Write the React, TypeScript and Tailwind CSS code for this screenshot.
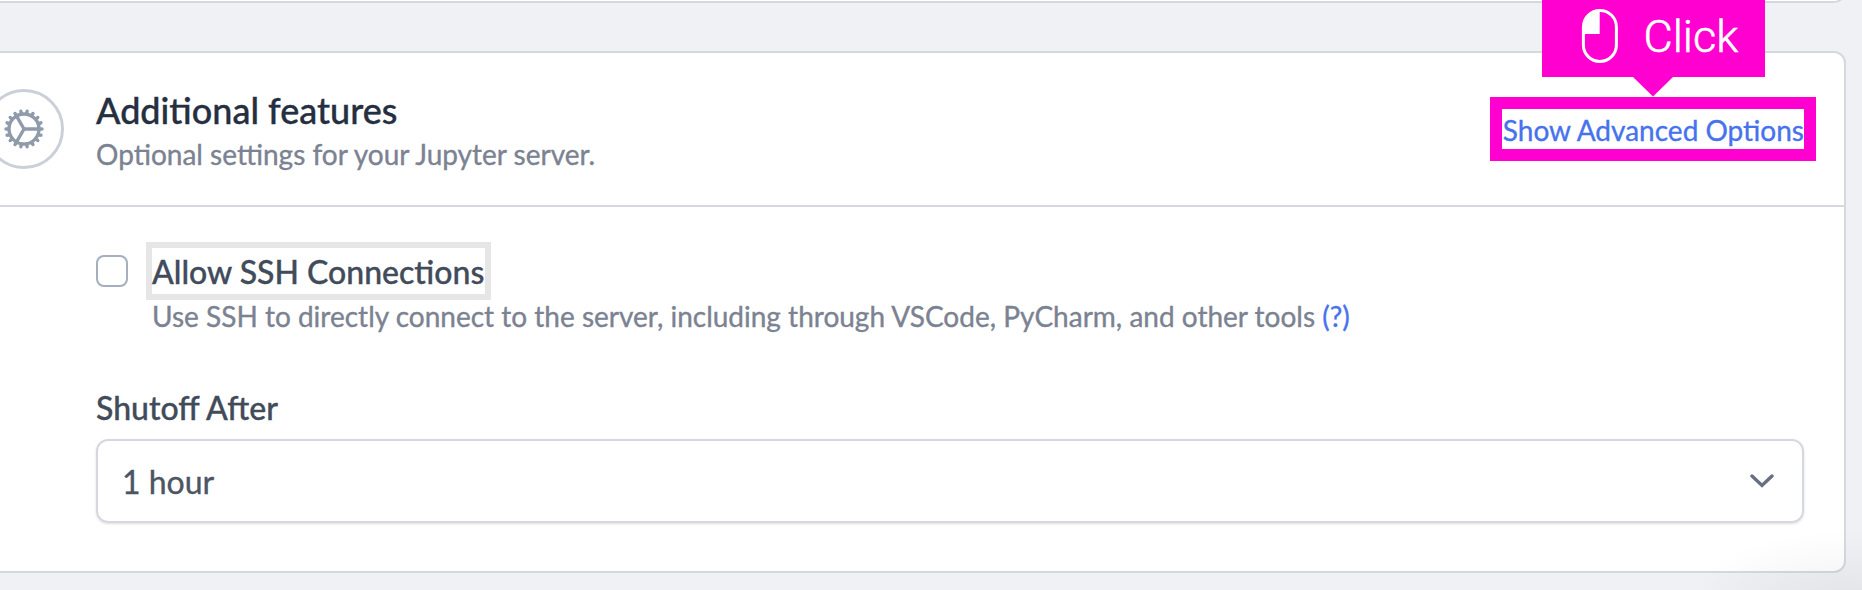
import React from "react";

function CogIcon() {
  return (
    <svg viewBox="0 0 24 24" className="h-12 w-12 shrink-0" fill="none" stroke="#8f9bab" strokeWidth="1.7" strokeLinecap="round" strokeLinejoin="round">
      <path d="M4.5 12a7.5 7.5 0 0 0 15 0m-15 0a7.5 7.5 0 1 1 15 0m-15 0H3m16.5 0H21m-1.5 0H12m-8.457 3.077 1.41-.513m14.095-5.13 1.41-.513M5.106 17.785l1.15-.964m11.49-9.642 1.149-.964M7.501 19.795l.75-1.3m7.5-12.99.75-1.3m-6.063 16.658.26-1.477m2.605-14.772.26-1.477m0 17.726-.26-1.477M10.698 4.614l-.26-1.477M16.5 19.794l-.75-1.299M7.5 4.205 12 12m6.894 5.785-1.149-.964M6.256 7.178l-1.15-.964m15.352 8.864-1.41-.513M4.954 9.435l-1.41-.514M12.002 12l-3.75 6.495" />
    </svg>
  );
}

function MouseIcon() {
  return (
    <svg viewBox="0 0 38 56" className="h-14 w-[38px]" fill="none">
      <rect x="2.4" y="2.4" width="33" height="51" rx="16.5" stroke="#fff" strokeWidth="3" />
      <path d="M18.7 2V26H2V18.7A16.7 16.7 0 0 1 18.7 2Z" fill="#fff" />
    </svg>
  );
}

function ClickHint() {
  return (
    <div className="absolute top-0 left-[1542px] h-[97px] w-[223px]">
      <div className="flex h-[77px] items-center bg-[#ff00d0] pl-[38.5px] pb-[5px]">
        <MouseIcon />
        <span className="mt-[2px] ml-[25px] font-['Roboto'] text-[45px] leading-[54px] font-light text-white [-webkit-text-stroke:0.6px_white]">Click</span>
      </div>
      <svg viewBox="0 0 40 20" className="ml-[91px] block h-5 w-10">
        <path d="M0 0H40L20 19.5Z" fill="#ff00d0" />
      </svg>
    </div>
  );
}

export default function App() {
  return (
    <div className="relative h-[590px] w-[1862px] overflow-hidden bg-[#f0f1f5] font-['Lato',sans-serif] whitespace-nowrap">
      <div className="-ml-5 h-[3px] w-[1866px] overflow-hidden">
        <div className="-mt-[37px] h-10 rounded-xl border-2 border-[#d5d8de] bg-white" />
      </div>

      <section className="mt-12 -ml-5 h-[522px] w-[1866px] rounded-xl border-2 border-[#d5d8de] bg-white [-webkit-text-stroke:0.35px_currentColor]">
        <header className="flex h-[154px] border-b-2 border-[#d5d8de]">
          <div className="mt-9 ml-[2px] flex h-20 w-20 shrink-0 items-center justify-center rounded-full border-[3.5px] border-[#cbd0d8]">
            <CogIcon />
          </div>
          <div className="ml-8 pt-[37px]">
            <h2 className="text-[36px] leading-[40px] font-medium text-[#252f3f]">Additional features</h2>
            <p className="mt-1 text-[28px] leading-[40px] text-[#7b8291]">Optional settings for your Jupyter server.</p>
          </div>
          <a className="mt-[57px] mr-[40px] ml-auto text-[28px] leading-[40px] text-[#4672ee]">Show Advanced Options</a>
        </header>

        <div className="pt-[35px] pr-10 pl-[114px]">
          <div className="flex">
            <div className="mt-[13px] h-8 w-8 rounded-lg border-2 border-[#a6afbd]" />
            <div className="ml-[18px]">
              <div className="flex h-[58px] w-[345px] items-center border-[6px] border-[#e6e6e6]">
                <span className="mt-[2px] text-[32px] leading-[40px] font-medium text-[#414b5a]">Allow SSH Connections</span>
              </div>
              <p className="-mt-1 ml-1.5 text-[28px] leading-[40px] text-[#7b8291]">
                Use SSH to directly connect to the server, including through VSCode, PyCharm, and other tools{" "}
                <a className="text-[#4672ee]">(?)</a>
              </p>
            </div>
          </div>
          <div className="mt-[52px] text-[32px] leading-[40px] font-medium text-[#414b5a]">Shutoff After</div>
          <div className="mt-[11px] flex h-[84px] w-[1708px] items-center justify-between rounded-xl border-2 border-[#d5d9df] pr-7 pl-6 shadow-sm">
            <span className="mt-[2px] text-[32px] leading-[40px] text-[#4b5563]">1 hour</span>
            <svg viewBox="0 0 24 14" className="h-[14px] w-6" fill="none" stroke="#677080" strokeWidth="3.4" strokeLinecap="round" strokeLinejoin="miter">
              <path d="M2 2L12 11.5L22 2" />
            </svg>
          </div>
        </div>
      </section>

      <div className="pointer-events-none absolute right-0 bottom-0 h-[70px] w-[200px] bg-[radial-gradient(ellipse_at_92%_125%,rgba(0,0,0,0.06),rgba(0,0,0,0)_62%)]" />
      <div className="absolute top-[97px] left-[1490px] h-16 w-[326px] border-[12px] border-[#ff00d0]" />
      <ClickHint />
    </div>
  );
}
